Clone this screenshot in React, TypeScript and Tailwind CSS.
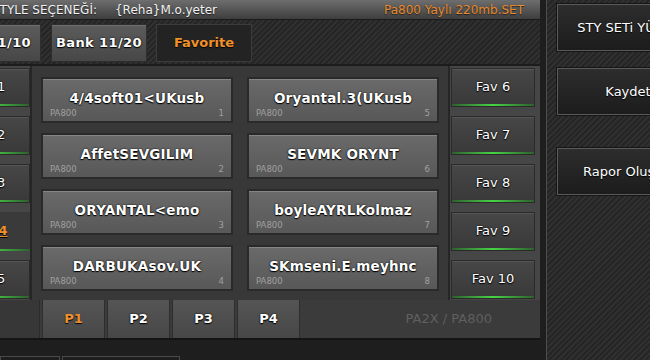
const cards: [string, number][] = [
  ['4/4soft01<UKusb', 1],
  ['Oryantal.3(UKusb', 5],
  ['AffetSEVGILIM', 2],
  ['SEVMK ORYNT', 6],
  ['ORYANTAL<emo', 3],
  ['boyleAYRLKolmaz', 7],
  ['DARBUKAsov.UK', 4],
  ['SKmseni.E.meyhnc', 8],
];

const shadow = '[text-shadow:0_1px_1px_#000,0_0_2px_#000]';

function FavButton({ label, active }: { label: string; active?: boolean }) {
  return (
    <div
      className={
        active
          ? 'flex h-[39px] flex-col bg-[#3a3a3a]'
          : 'flex h-[39px] flex-col border border-[#2a2a2a] bg-linear-to-b from-[#474747] to-[#393939] shadow-[inset_0_1px_0_#565656]'
      }
    >
      <div
        className={
          active
            ? 'flex flex-1 items-center justify-center text-[13px] font-bold text-[#f0902a] underline [text-shadow:0_1px_1px_#000]'
            : `flex flex-1 items-center justify-center text-[13px] text-white ${shadow}`
        }
      >
        {label}
      </div>
      <div className="h-[2px] bg-[linear-gradient(90deg,#2f5f2f,#47d447_50%,#2f5f2f)]" />
    </div>
  );
}

function Card({ title, n }: { title: string; n: number }) {
  return (
    <div className="flex h-[46px] flex-col border-2 border-[#2a2a2a] bg-linear-to-b from-[#6a6a6a] to-[#585858] px-[7px] shadow-[inset_0_1px_0_#848484]">
      <div className={`flex flex-1 items-end justify-center text-[13.5px] font-bold tracking-[0.2px] text-white ${shadow}`}>
        {title}
      </div>
      <div className="flex h-[13px] items-start justify-between text-[8.5px] leading-[11px] text-[#a0a0a0]">
        <span>PA800</span>
        <span>{n}</span>
      </div>
    </div>
  );
}

function TopButton({ label, dark, shift }: { label: string; dark?: boolean; shift?: boolean }) {
  return (
    <div
      className={
        dark
          ? 'flex h-[38px] w-[96px] shrink-0 items-center justify-center whitespace-nowrap border border-[#3c3c3c] bg-[#232323] text-[13px] font-bold text-[#f0902a] [text-shadow:0_1px_1px_#000]'
          : shift
            ? `flex h-[38px] w-[96px] shrink-0 items-center justify-center whitespace-nowrap border border-[#2e2e2e] bg-linear-to-b from-[#5c5c5c] to-[#474747] pr-[10px] text-[13px] font-bold tracking-[0.4px] text-white shadow-[inset_0_1px_0_#6e6e6e] ${shadow}`
            : `flex h-[38px] w-[96px] shrink-0 items-center justify-center whitespace-nowrap border border-[#2e2e2e] bg-linear-to-b from-[#5c5c5c] to-[#474747] text-[13px] font-bold tracking-[0.4px] text-white shadow-[inset_0_1px_0_#6e6e6e] ${shadow}`
      }
    >
      {label}
    </div>
  );
}

function SideButton({ label }: { label: string }) {
  return (
    <div className="flex h-[47px] w-[142px] shrink-0 items-center justify-center whitespace-nowrap border border-[#5a5a5a] bg-linear-to-b from-[#2d2d2d] to-[#1c1c1c] text-[13px] text-white shadow-[0_0_0_1px_#151515] [text-shadow:0_1px_1px_#000]">
      {label}
    </div>
  );
}

export default function App() {
  return (
    <div className="flex h-[360px] w-[650px] overflow-hidden bg-[#262626] bg-[repeating-linear-gradient(135deg,#303030_0px,#303030_2px,#252525_2px,#252525_4px)] font-['DejaVu_Sans',sans-serif]">
      <div className="flex w-[546px] shrink-0 flex-col">
        <div className="-ml-[60px] flex h-[340px]">
          <div className="flex w-[600px] shrink-0 flex-col">
            <div className="flex h-[20px] items-center justify-between border-b border-[#1a1a1a] bg-linear-to-b from-[#6e6e6e] to-[#3e3e3e] pl-[52px] pr-[16px] text-[12px]">
              <div className="text-[#f2f2f2] [text-shadow:0_1px_1px_#222]">
                <span>STYLE SEÇENEĞİ:</span>
                <span className="ml-[18px]">{'{Reha}M.o.yeter'}</span>
              </div>
              <span className="text-[#e8892b] [text-shadow:0_1px_1px_#222]">Pa800 Yaylı 220mb.SET</span>
            </div>

            <div className="flex h-[46px] items-start border-b-2 border-[#1c1c1c] pl-[5px] pt-[4px]">
              <TopButton label="Bank 01/10" shift />
              <div className="ml-[10px]">
                <TopButton label="Bank 11/20" />
              </div>
              <div className="ml-[9px]">
                <TopButton label="Favorite" dark />
              </div>
            </div>

            <div className="flex h-[234px] bg-[#383838]">
              <div className="flex w-[92px] flex-col gap-[9px] border-r-2 border-[#262626] bg-[#464646] pl-[6px] pt-[2px]">
                <FavButton label="Fav 1" />
                <FavButton label="Fav 2" />
                <FavButton label="Fav 3" />
                <FavButton label="Fav 4" active />
                <FavButton label="Fav 5" />
              </div>

              <div className="grid w-[416px] grid-cols-2 content-start gap-x-[14px] gap-y-[10px] px-[9px] pt-[11px]">
                {cards.map(([t, n]) => (
                  <Card key={n} title={t} n={n} />
                ))}
              </div>

              <div className="flex w-[92px] flex-col gap-[9px] border-l-2 border-[#262626] bg-[#464646] pl-[1px] pr-[5px] pt-[2px]">
                {[6, 7, 8, 9, 10].map((i) => (
                  <FavButton key={i} label={`Fav ${i}`} />
                ))}
              </div>
            </div>

            <div className="flex h-[40px] items-start gap-[2px] border-b-2 border-[#151515] bg-[#3b3b3b]">
              <div className="h-[38px] w-[100px] border-r border-[#2c2c2c] bg-[#373737]" />
              {['P1', 'P2', 'P3', 'P4'].map((p, i) => (
                <div
                  key={p}
                  className={
                    i === 0
                      ? 'flex h-[38px] w-[63px] items-center justify-center border-x border-[#2e2e2e] bg-linear-to-b from-[#555555] to-[#474747] text-[13px] font-bold text-[#f0902a] [text-shadow:0_1px_1px_#000]'
                      : `flex h-[38px] w-[63px] items-center justify-center border-x border-[#2e2e2e] bg-linear-to-b from-[#555555] to-[#474747] text-[13px] font-bold text-white ${shadow}`
                  }
                >
                  {p}
                </div>
              ))}
              <div className="ml-auto flex h-[38px] items-center pr-[48px] text-[13px] text-[#5f5f5f]">PA2X / PA800</div>
            </div>
          </div>
          <div className="w-[6px] shrink-0 bg-[#1e1e1e]" />
        </div>

        <div className="flex flex-1 items-end gap-[2px] bg-[#1e1e1e]">
          <div className="h-[4px] w-[60px] border-x border-t border-[#4a4a4a]" />
          <div className="h-[4px] w-[118px] border-x border-t border-[#4a4a4a]" />
        </div>
      </div>

      <div className="w-px shrink-0 bg-[#4e4e4e]" />

      <div className="flex flex-col pl-[10px] pt-[4px]">
        <SideButton label="STY  SETi YÜKLE" />
        <div className="mt-[17px]">
          <SideButton label="Kaydet" />
        </div>
        <div className="mt-[33px]">
          <SideButton label="Rapor Oluştur" />
        </div>
      </div>
    </div>
  );
}
